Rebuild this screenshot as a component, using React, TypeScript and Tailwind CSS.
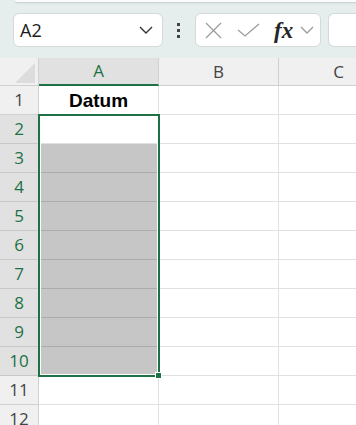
import React from 'react'

const ROWS = [1, 2, 3, 4, 5, 6, 7, 8, 9, 10, 11, 12]
const COLS = ['A', 'B', 'C']

const uiFont = { fontFamily: '"Open Sans", "Noto Sans", sans-serif' }

function Chevron({ className }: { className?: string }) {
  return (
    <svg className={className} width="14" height="8" viewBox="0 0 14 8" fill="none">
      <polyline points="1,1 7,7 13,1" stroke="currentColor" strokeWidth="1.4" />
    </svg>
  )
}

function Toolbar() {
  return (
    <div className="relative h-[58px] bg-[#e5eded]" style={uiFont}>
      <div className="ml-[15px] h-[2px] rounded-bl-[6px] bg-[#fbfbfb] shadow-[0_1px_2px_rgba(0,0,0,0.15)]" />
      <div className="flex items-start pl-[13px] pt-[11px]">
        <div className="flex h-[34px] w-[150px] items-center justify-between rounded-[6px] border border-[#d5d9d9] bg-white pl-[6px] pr-[9px]">
          <span className="text-[18px] leading-none text-[#1a1a1a]">A2</span>
          <Chevron className="text-[#333]" />
        </div>
        <div className="ml-[14px] flex h-[34px] w-[3px] flex-col items-center justify-center gap-[3px]">
          <div className="h-[3px] w-[3px] bg-[#444]" />
          <div className="h-[3px] w-[3px] bg-[#444]" />
          <div className="h-[3px] w-[3px] bg-[#444]" />
        </div>
        <div className="ml-[15px] flex h-[34px] w-[126px] items-center rounded-[6px] border border-[#d5d9d9] bg-white">
          <svg className="ml-[9px]" width="17" height="17" viewBox="0 0 17 17" fill="none">
            <line x1="1" y1="1" x2="16" y2="16" stroke="#9c9c9c" strokeWidth="1.3" />
            <line x1="16" y1="1" x2="1" y2="16" stroke="#9c9c9c" strokeWidth="1.3" />
          </svg>
          <svg className="ml-[15px]" width="23" height="14" viewBox="0 0 23 14" fill="none">
            <polyline points="1,7 8,13 22,1" stroke="#9c9c9c" strokeWidth="1.3" />
          </svg>
          <span
            className="ml-[14px] text-[23px] font-semibold italic leading-none text-[#262626]"
            style={{ fontFamily: '"Liberation Serif", serif' }}
          >
            fx
          </span>
          <Chevron className="ml-[7px] text-[#9c9c9c]" />
        </div>
        <div className="ml-[7px] h-[34px] flex-1 rounded-l-[6px] border border-r-0 border-[#d5d9d9] bg-white" />
      </div>
    </div>
  )
}

function Grid() {
  const isSelRow = (r: number) => r >= 2 && r <= 10
  return (
    <div className="relative" style={uiFont}>
      <div className="flex h-[28px]">
        <div className="relative w-[39px] shrink-0 border-r border-b border-[#d0d0d0] bg-[#f0f0f0]">
          <svg className="absolute left-[15px] top-[5px]" width="21" height="21" viewBox="0 0 21 21">
            <polygon points="0,20 20,0 20,20" fill="#dcdcdc" />
          </svg>
        </div>
        {COLS.map((c) => (
          <div
            key={c}
            className={
              c === 'A'
                ? 'flex w-[120px] shrink-0 items-center justify-center border-r border-b-2 border-r-[#d0d0d0] border-b-[#1e7145] bg-[#e1e1e1] text-[17px] text-[#1e7145]'
                : 'flex w-[120px] shrink-0 items-center justify-center border-r border-b border-[#d0d0d0] bg-[#f0f0f0] text-[17px] text-[#444]'
            }
          >
            {c}
          </div>
        ))}
      </div>
      {ROWS.map((r) => (
        <div key={r} className="flex h-[29px]">
          <div
            className={
              isSelRow(r)
                ? 'flex w-[39px] shrink-0 items-center justify-center border-r border-b border-[#c8c8c8] bg-[#e1e1e1] text-[17px] text-[#1e7145]'
                : 'flex w-[39px] shrink-0 items-center justify-center border-r border-b border-[#d0d0d0] bg-[#f0f0f0] text-[17px] text-[#444]'
            }
          >
            {r}
          </div>
          <div
            className={
              r >= 3 && r <= 10
                ? 'flex w-[120px] shrink-0 items-center justify-center border-r border-b border-[#ababab] bg-[#c6c6c6]'
                : 'flex w-[120px] shrink-0 items-center justify-center border-r border-b border-[#e1e1e1] bg-white'
            }
          >
            {r === 1 && (
              <span
                className="text-[19px] font-bold leading-none text-black"
                style={{ fontFamily: '"Liberation Sans", Arial, sans-serif' }}
              >
                Datum
              </span>
            )}
          </div>
          <div className="w-[120px] shrink-0 border-r border-b border-[#e1e1e1] bg-white" />
          <div className="w-[120px] shrink-0 border-r border-b border-[#e1e1e1] bg-white" />
        </div>
      ))}
      {/* selection frame A2:A10 */}
      <div className="pointer-events-none absolute left-[38px] top-[56px] h-[263px] w-[122px] border-2 border-[#1e7145] shadow-[inset_0_0_0_1px_#ffffff]" />
      <div className="pointer-events-none absolute left-[155px] top-[314px] h-[7px] w-[7px] border border-white bg-[#1e7145]" />
    </div>
  )
}

export default function App() {
  return (
    <div className="h-[425px] w-[356px] overflow-hidden bg-white">
      <Toolbar />
      <Grid />
    </div>
  )
}
